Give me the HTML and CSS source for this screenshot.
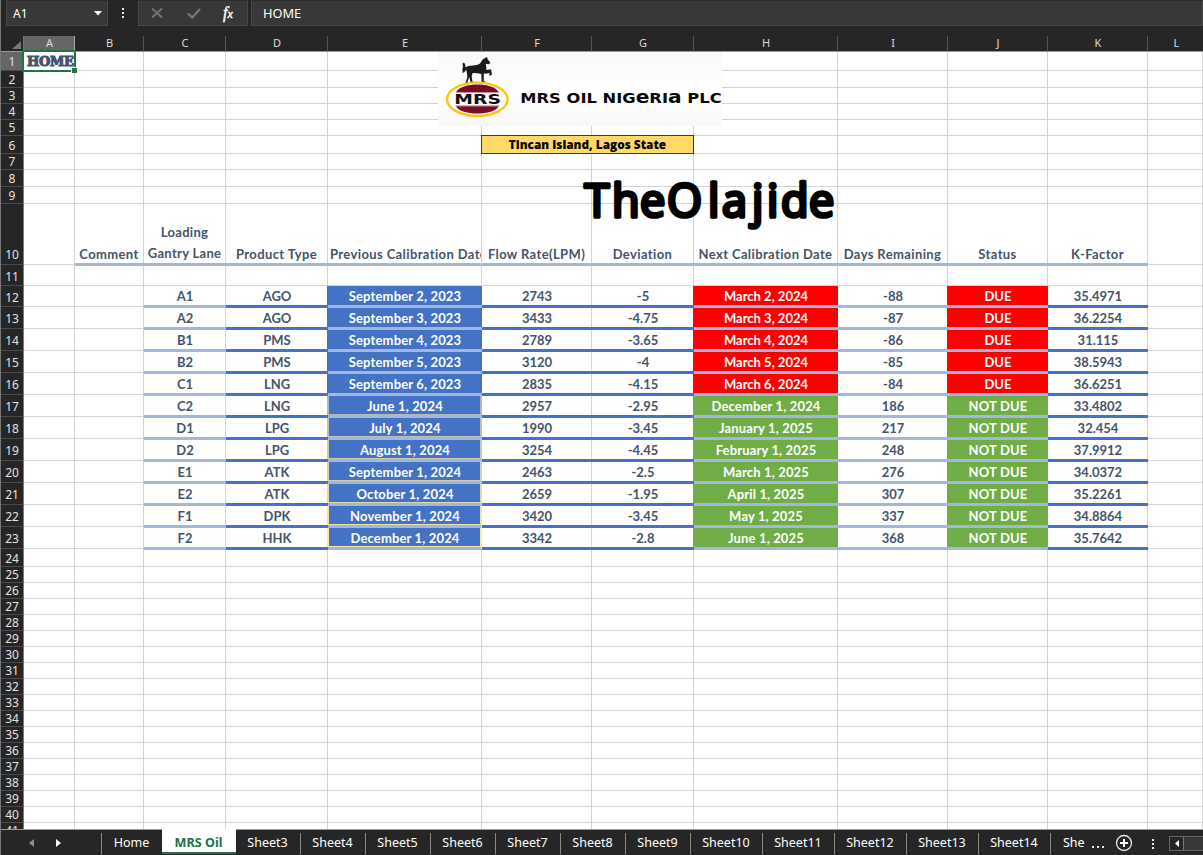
FILE: index.html
```html
<!DOCTYPE html>
<html lang="en">
<head>
<meta charset="utf-8">
<title>MRS Oil</title>
<link rel="stylesheet" href="styles.css">
</head>
<body>
<div class="app">
  <div class="formula-bar">
    <div class="box name-box"><span>A1</span><svg width="8" height="5" viewBox="0 0 8 5"><path d="M0 0h8L4 4.6z" fill="#fff"/></svg></div>
    <div class="dots"><i></i><i></i><i></i></div>
    <div class="box actions">
      <svg width="14" height="14" viewBox="0 0 14 14"><path d="M2 2.500l10 9M12 2.500l-10 9" stroke="#757575" stroke-width="1.800" fill="none"/></svg>
      <svg width="14" height="14" viewBox="0 0 14 14"><path d="M1 7.500l4.200 4L13 3" stroke="#757575" stroke-width="2.300" fill="none"/></svg>
      <span class="fx">f<small>x</small></span>
    </div>
    <div class="box formula">HOME</div>
  </div>
  <div class="sheet" id="sheet">
    <div class="overlay logo">
      <svg width="284" height="74" viewBox="0 0 852 222">
        <g fill="#1c1a1b">
          <path d="M84 46C92 38 116 42 124 36C130 31 130 25 137 20L147 15L149 22L157 32L153 37L143 35C146 45 145 51 145 54L159 52L162 68L153 71L155 63L144 65L138 64C137 74 138 82 137 87L143 90L131 91L130 66C120 64 111 63 104 63L101 73L103 88L108 91L98 92L94 75L88 91L94 94L82 95L88 75L86 58C84 52 83 49 84 46Z"/>
          <path d="M86 47C79 44 84 34 77 32C70 32 77 42 74 49C71 55 76 57 73 63C81 60 85 55 86 47Z"/>
        </g>
        <ellipse cx="118" cy="142" rx="91" ry="50" fill="#fff" stroke="#fdc50c" stroke-width="7"/>
        <path d="M54 121C68 90 168 90 182 121Z" fill="#7c0a24"/>
        <path d="M54 163C68 192 168 192 182 163Z" fill="#7c0a24"/>
        <path d="M53 122H183M53 161H183" stroke="#b56b78" stroke-width="2"/>
        <text x="49" y="156" textLength="140" lengthAdjust="spacingAndGlyphs" class="mark">MRS</text>
        <text x="247" y="152" textLength="604" lengthAdjust="spacingAndGlyphs" class="company">MRS OIL NIG<tspan class="uni">e</tspan>RI<tspan class="uni">a</tspan> PLC</text>
      </svg>
    </div>
    <div class="overlay place">Tincan Island, Lagos State</div>
    <svg class="overlay brand" width="270" height="80" viewBox="0 0 270 80"><text x="9.500 37 65 92 133 147 177 192 206 234" y="51.500">TheOlajide</text></svg>
    <div class="overlay selection"><i></i></div>
  </div>
  <div class="tab-bar">
    <div class="nav">
      <svg width="5" height="8" viewBox="0 0 5 8"><path d="M5 0v8L0 4z" fill="#8f8f8f"/></svg>
      <svg width="5" height="8" viewBox="0 0 5 8"><path d="M0 0v8l5-4z" fill="#fff"/></svg>
    </div>
    <div class="tab home">Home</div><div class="tab active">MRS Oil</div>
    <div class="tab">Sheet3</div><div class="tab">Sheet4</div><div class="tab">Sheet5</div><div class="tab">Sheet6</div><div class="tab">Sheet7</div><div class="tab">Sheet8</div><div class="tab">Sheet9</div>
    <div class="tab wide">Sheet10</div><div class="tab wide">Sheet11</div><div class="tab wide">Sheet12</div><div class="tab wide">Sheet13</div><div class="tab wide">Sheet14</div>
    <div class="tab cut">She</div>
    <div class="more"><i></i><i></i><i></i></div>
    <svg class="add" width="18" height="18" viewBox="0 0 18 18"><circle cx="9" cy="9" r="7.500" fill="none" stroke="#e6e6e6" stroke-width="1.300"/><path d="M9 5v8M5 9h8" stroke="#fff" stroke-width="2"/></svg>
    <div class="dots"><i></i><i></i><i></i></div>
    <div class="scroll"><span><svg width="4" height="7" viewBox="0 0 4 7"><path d="M4 0v7L0 3.500z" fill="#fff"/></svg></span><b></b></div>
  </div>
</div>
<script src="script.js"></script>
</body>
</html>
```
FILE: styles.css
```css
* { box-sizing: border-box; }
body { margin: 0; background: #262626; font-family: "Noto Sans", "Open Sans", sans-serif; }
.app { width: 1203px; height: 855px; overflow: hidden; display: flex; flex-direction: column; border-left: 1px solid #777; background: #262626; color: #fff; }
svg { display: block; flex: none; }

.formula-bar { height: 36px; flex: none; display: flex; padding-left: 5px; font-size: 12px; }
.box { height: 26px; background: #383838; border: 1px solid #484848; border-top-color: #2c2c2c; display: flex; align-items: center; }
.name-box { width: 102px; padding: 0 5px 0 6px; justify-content: space-between; }
.dots { display: flex; flex-direction: column; gap: 2px; justify-content: center; align-items: center; }
.dots i { width: 2px; height: 2px; background: #e8e8e8; }
.formula-bar .dots { width: 30px; height: 26px; }
.actions { width: 110px; padding: 0 9px 0 11px; justify-content: space-between; margin-right: 3px; }
.fx { font: italic 16px "Liberation Serif", serif; width: 15px; line-height: 16px; -webkit-text-stroke: 0.4px #fff; }
.fx small { font-size: 12px; }
.formula { flex: 1; padding-left: 11px; font-size: 12.8px; }

.sheet { position: relative; height: 793px; flex: none; overflow: hidden; background: #fff; }
.row { display: grid; grid-template-columns: 23px 51px 69px 82px 102px 154px 110px 102px 144px 110px 100px 100px 55px; }
.head { background: #262626; border-right: 1px solid #7a7a7a; border-bottom: 1px solid #4a4a4a; color: #e2e2e2; font-size: 12px; display: flex; align-items: flex-end; justify-content: center; line-height: 15px; overflow: hidden; }
.head.tall { padding-bottom: 1px; }
.head.taller { padding-bottom: 2px; }
.head.cropped { align-items: flex-start; border-bottom: 0; }
.columns { height: 16px; }
.columns > div { background: #262626; border-right: 1px solid #555; border-bottom: 1px solid #999; color: #dcdcdc; font-size: 11px; line-height: 14px; text-align: center; padding-left: 1px; }
.columns > div:last-child { border-right: 0; padding-left: 2px; }
.columns .corner { padding: 5px 0 0 11px; border-right-color: #777; }
.columns .current, .head.current { background: #666; }
.columns .current { border-right-color: #aaa; }

.cell {
  --right: #d4d4d4; --line: #d4d4d4; --weight: 1px; --cap: transparent; --fill: #fff;
  background:
    linear-gradient(var(--line), var(--line)) 0 100% / 100% var(--weight) no-repeat,
    linear-gradient(var(--cap), var(--cap)) 0 0 / 100% 1px no-repeat,
    linear-gradient(var(--right), var(--right)) 100% 0 / 1px 100% no-repeat,
    var(--fill);
  display: flex; align-items: flex-end; justify-content: center; text-align: center;
  white-space: nowrap; overflow: hidden; color: #44546a; min-width: 0;
  font: bold 13px/20px Lato, Carlito, sans-serif; padding-bottom: 1px;
}
.cell.light { --line: #a2b6e0; --weight: 2px; }
.cell.dark { --line: #4472c4; --weight: 2px; }
.cell.cap-light { --cap: #a2b6e0; }
.cell.cap-dark { --cap: #4472c4; }
.cell.blue { --fill: #4472c4; --right: #4472c4; color: #fff; letter-spacing: 0.15px; }
.cell.red { --fill: #f00; --right: #f00; color: #fff; }
.cell.green { --fill: #70ad47; --right: #70ad47; color: #fff; letter-spacing: 0.15px; }
.cell.before-blue { --right: #4472c4; }
.cell.before-red { --right: #f00; }
.cell.before-green { --right: #70ad47; }
.cell.before-glow { --right: var(--glow); }
.cell.glow {
  background:
    linear-gradient(var(--line), var(--line)) 0 100% / 153px 2px no-repeat,
    linear-gradient(var(--cap), var(--cap)) 0 0 / 153px 1px no-repeat,
    linear-gradient(var(--glow), var(--glow)) 0 calc(100% - 2px) / 100% 1px no-repeat,
    linear-gradient(var(--glow), var(--glow)) 0 0 / 1px 100% no-repeat,
    linear-gradient(var(--glow), var(--glow)) 100% 0 / 2px 100% no-repeat,
    var(--fill);
}
.cell.title { letter-spacing: 0.38px; white-space: pre; padding-right: 1px; }
.cell.title.lane { line-height: 21px; letter-spacing: 0.3px; }
.cell.title.start { justify-content: flex-start; padding: 0 0 1px 2px; margin-right: 1px; background: linear-gradient(var(--line), var(--line)) 0 100% / 100% 2px no-repeat; }
.cell.title.start + .cell { box-shadow: -1px 0 #d4d4d4; }
.cell.home { font: 900 13px/17px "DejaVu Serif", serif; justify-content: flex-start; padding-left: 3px; -webkit-text-stroke: 1.1px #44546a; letter-spacing: -0.3px; }

.overlay { position: absolute; }
.logo { left: 437px; top: 16px; width: 284px; height: 74px; background: linear-gradient(#f8f8f8, #fff 50%, #f8f8f8); }
.mark { font: bold 43px "DejaVu Sans", sans-serif; fill: #111; stroke: #fff; stroke-width: 6px; paint-order: stroke; }
.company { font: bold 42px "DejaVu Sans", sans-serif; fill: #080808; }
.uni { font-size: 52px; }
.place { left: 480px; top: 99px; width: 213px; height: 19px; border: 1px solid #a01010; background: #ffd966; color: #000; font: 800 11.8px/17px "Open Sans", sans-serif; text-align: center; }
.brand { left: 574px; top: 129px; font: 400 45px "Open Sans", sans-serif; stroke: #000; stroke-width: 3.6px; stroke-linejoin: round; stroke-linecap: round; }
.selection { left: 21px; top: 14px; width: 54px; height: 22px; border: 2px solid #217346; }
.selection i { position: absolute; right: -3px; bottom: -3px; width: 6px; height: 6px; background: #217346; border: solid #fff; border-width: 1px 0 0 1px; }

.tab-bar { height: 26px; flex: none; border-top: 1px solid #999; display: flex; font-size: 12.5px; align-items: flex-start; }
.nav { width: 100px; height: 25px; display: flex; gap: 22px; padding-left: 28px; align-items: center; }
.tab { width: 65px; height: 21px; margin-top: 3px; border-right: 1px solid #8a8a8a; line-height: 19px; text-align: center; padding-right: 1px; }
.tab.home { width: 61px; border-left: 1px solid #8a8a8a; border-right: 0; }
.tab.active { width: 74px; height: 25px; margin-top: -1px; line-height: 27px; background: #fff; color: #217346; font-weight: bold; border-right: 0; border-bottom: 2px solid #217346; font-size: 12.6px; }
.tab.wide { width: 72px; }
.tab.cut { width: 33px; border: 0; padding-left: 12px; text-align: left; }
.more { display: flex; gap: 3px; padding: 16px 0 0 8px; width: 31px; }
.more i { width: 2px; height: 2px; background: #eee; }
.add { margin-top: 4px; }
.tab-bar .dots { width: 40px; height: 27px; }
.scroll { display: flex; height: 15px; flex: 1; margin-top: 6px; margin-left: -4px; border: 1px solid #666; border-right: 0; }
.scroll span { width: 14px; display: flex; align-items: center; justify-content: center; border-right: 1px solid #777; }
.scroll b { flex: 1; background: #383838; }
```
FILE: script.js
```js
const heights = { 1: 19, 2: 17, 6: 18, 8: 17, 9: 17, 10: 61, 11: 21, 12: 21, 24: 18, 41: 7 };
const titles = ["", "Comment", "Loading\nGantry Lane", "Product Type", "Previous Calibration Date", "Flow Rate(LPM)", "Deviation", "Next Calibration Date", "Days Remaining", "Status", "K-Factor", ""];
const records = [
  ["A1", "AGO", "September 2, 2023", "2743", "-5", "March 2, 2024", "-88", "DUE", "35.4971"],
  ["A2", "AGO", "September 3, 2023", "3433", "-4.75", "March 3, 2024", "-87", "DUE", "36.2254"],
  ["B1", "PMS", "September 4, 2023", "2789", "-3.65", "March 4, 2024", "-86", "DUE", "31.115"],
  ["B2", "PMS", "September 5, 2023", "3120", "-4", "March 5, 2024", "-85", "DUE", "38.5943"],
  ["C1", "LNG", "September 6, 2023", "2835", "-4.15", "March 6, 2024", "-84", "DUE", "36.6251"],
  ["C2", "LNG", "June 1, 2024", "2957", "-2.95", "December 1, 2024", "186", "NOT DUE", "33.4802"],
  ["D1", "LPG", "July 1, 2024", "1990", "-3.45", "January 1, 2025", "217", "NOT DUE", "32.454"],
  ["D2", "LPG", "August 1, 2024", "3254", "-4.45", "February 1, 2025", "248", "NOT DUE", "37.9912"],
  ["E1", "ATK", "September 1, 2024", "2463", "-2.5", "March 1, 2025", "276", "NOT DUE", "34.0372"],
  ["E2", "ATK", "October 1, 2024", "2659", "-1.95", "April 1, 2025", "307", "NOT DUE", "35.2261"],
  ["F1", "DPK", "November 1, 2024", "3420", "-3.45", "May 1, 2025", "337", "NOT DUE", "34.8864"],
  ["F2", "HHK", "December 1, 2024", "3342", "-2.8", "June 1, 2025", "368", "NOT DUE", "35.7642"]
];
const glows = ["#aeb9b0", "#bcc2ad", "#c8caa9", "#d5d3a5", "#e2dba1", "#f0e39d", "#ffe699"];
const sheet = document.getElementById("sheet");

function add(parent, className, text) {
  const el = document.createElement("div");
  el.className = className;
  if (text) el.textContent = text;
  parent.appendChild(el);
  return el;
}

const header = add(sheet, "row columns");
add(header, "corner").innerHTML = '<svg width="9" height="8" viewBox="0 0 9 8"><path d="M9 0v8H0z" fill="#777"/></svg>';
[..."ABCDEFGHIJKL"].forEach((c, i) => add(header, i ? "" : "current", c));

// Theme colour of the thick rule beneath each data column
const tone = c => [3, 5, 6, 10].includes(c) ? "dark" : "light";

for (let n = 1; n <= 41; n++) {
  const row = add(sheet, "row");
  const height = heights[n] || (n > 12 && n < 24 ? 22 : 16);
  row.style.height = height + "px";
  add(row, "head" + (n === 1 ? " current" : "") + (height === 22 || n === 10 ? " taller" : height > 18 ? " tall" : "") + (n === 41 ? " cropped" : ""), String(n));
  const record = records[n - 12];
  const state = n < 17 ? "red" : "green";
  for (let c = 0; c < 12; c++) {
    const names = ["cell"];
    let text = "";
    if (n === 1 && c === 0) { names.push("home"); text = "HOME"; }
    if (n === 10) {
      text = titles[c];
      names.push("title");
      if (c === 2) names.push("lane");
      if (c === 4) names.push("start");
      if (c > 0 && c < 11) names.push("light");
    }
    if (n === 11 && c > 0 && c < 11) names.push("cap-light");
    if (n > 12 && n < 25 && c > 1 && c < 11) names.push("cap-" + tone(c));
    if (record && c > 1 && c < 11) {
      text = record[c - 2];
      names.push(tone(c));
      if (c === 4) names.push("blue");
      if (c === 7 || c === 9) names.push(state);
      if (c === 3) names.push(n > 16 ? "before-glow" : "before-blue");
      if (c === 6 || c === 8) names.push("before-" + state);
      if (c === 4 && n > 16) names.push("glow");
    }
    const cell = add(row, names.join(" "), text);
    if (n > 16 && record) cell.style.setProperty("--glow", glows[n - 17]);
  }
}
```
